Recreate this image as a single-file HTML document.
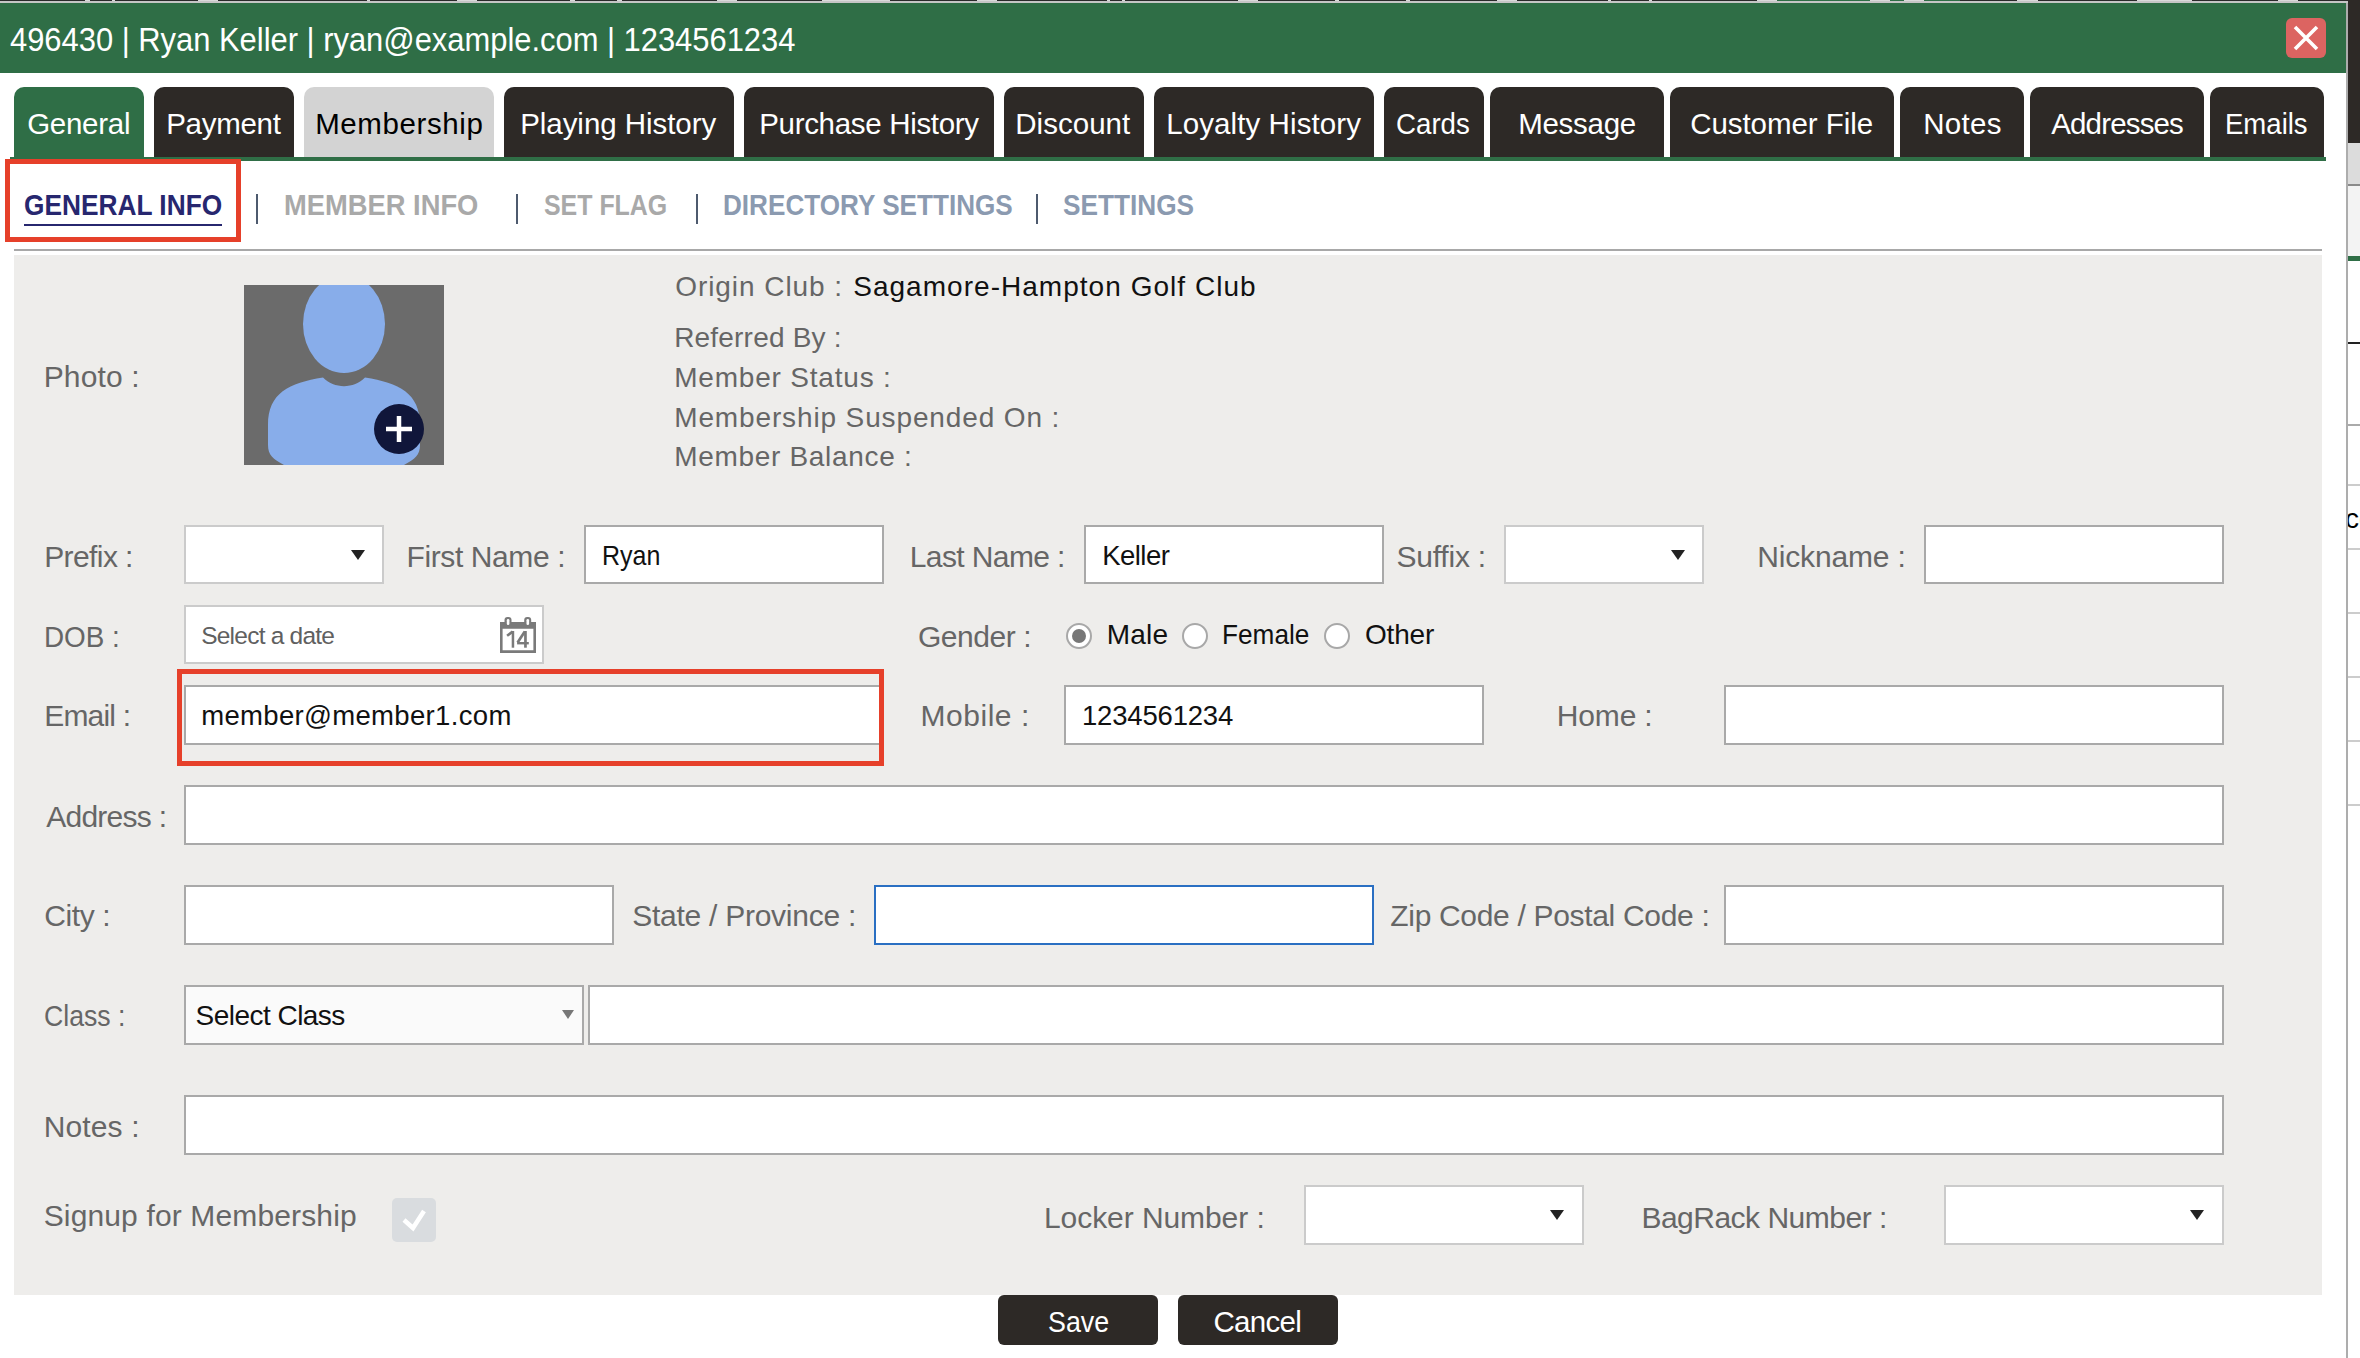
<!DOCTYPE html><html><head><meta charset="utf-8"><style>
html,body{margin:0;padding:0;width:2360px;height:1358px;overflow:hidden;background:#fff;position:relative;}
body{font-family:"Liberation Sans",sans-serif;}
.t{position:absolute;white-space:nowrap;}
.inp{position:absolute;box-sizing:border-box;background:#fff;border:2px solid #a9a9a9;}
.sel{position:absolute;box-sizing:border-box;background:#fff;border:2px solid #cbcbcb;}
.tab{position:absolute;top:87px;height:70px;background:#2d2926;border-radius:10px 10px 0 0;}
</style></head><body>
<div style="position:absolute;left:2348px;top:0px;width:12px;height:143px;background:#2d2926"></div>
<div style="position:absolute;left:2348px;top:143px;width:12px;height:41px;background:#dcdcdc"></div>
<div style="position:absolute;left:2348px;top:184px;width:12px;height:2px;background:#8a8a8a"></div>
<div style="position:absolute;left:2348px;top:186px;width:12px;height:70px;background:#f3f3f3"></div>
<div style="position:absolute;left:2348px;top:256px;width:12px;height:5px;background:#2f6e46"></div>
<div style="position:absolute;left:2348px;top:342px;width:12px;height:2px;background:#222"></div>
<div style="position:absolute;left:2348px;top:424px;width:12px;height:2px;background:#aaaaaa"></div>
<div style="position:absolute;left:2348px;top:484px;width:12px;height:2px;background:#cccccc"></div>
<div style="position:absolute;left:2348px;top:548px;width:12px;height:2px;background:#cccccc"></div>
<div style="position:absolute;left:2348px;top:612px;width:12px;height:2px;background:#cccccc"></div>
<div style="position:absolute;left:2348px;top:676px;width:12px;height:2px;background:#cccccc"></div>
<div style="position:absolute;left:2348px;top:740px;width:12px;height:2px;background:#cccccc"></div>
<div style="position:absolute;left:2348px;top:804px;width:12px;height:2px;background:#cccccc"></div>
<div class="t" style="left:2345px;top:505px;font-size:28px;line-height:28px;color:#000">co</div>
<div style="position:absolute;left:0px;top:0px;width:2348px;height:1px;background:#2a2a2a"></div>
<div style="position:absolute;left:0px;top:1px;width:2348px;height:2px;background:#c6c6c6"></div>
<div style="position:absolute;left:85px;top:0px;width:5px;height:1px;background:#dadada"></div>
<div style="position:absolute;left:112px;top:0px;width:3px;height:1px;background:#dadada"></div>
<div style="position:absolute;left:198px;top:0px;width:20px;height:1px;background:#dadada"></div>
<div style="position:absolute;left:367px;top:0px;width:3px;height:1px;background:#dadada"></div>
<div style="position:absolute;left:457px;top:0px;width:20px;height:1px;background:#dadada"></div>
<div style="position:absolute;left:570px;top:0px;width:5px;height:1px;background:#dadada"></div>
<div style="position:absolute;left:617px;top:0px;width:5px;height:1px;background:#dadada"></div>
<div style="position:absolute;left:717px;top:0px;width:20px;height:1px;background:#dadada"></div>
<div style="position:absolute;left:822px;top:0px;width:68px;height:1px;background:#dadada"></div>
<div style="position:absolute;left:977px;top:0px;width:20px;height:1px;background:#dadada"></div>
<div style="position:absolute;left:1107px;top:0px;width:3px;height:1px;background:#dadada"></div>
<div style="position:absolute;left:1122px;top:0px;width:3px;height:1px;background:#dadada"></div>
<div style="position:absolute;left:1238px;top:0px;width:20px;height:1px;background:#dadada"></div>
<div style="position:absolute;left:1335px;top:0px;width:4px;height:1px;background:#dadada"></div>
<div style="position:absolute;left:1406px;top:0px;width:4px;height:1px;background:#dadada"></div>
<div style="position:absolute;left:1497px;top:0px;width:20px;height:1px;background:#dadada"></div>
<div style="position:absolute;left:1608px;top:0px;width:3px;height:1px;background:#dadada"></div>
<div style="position:absolute;left:1649px;top:0px;width:3px;height:1px;background:#dadada"></div>
<div style="position:absolute;left:1757px;top:0px;width:20px;height:1px;background:#dadada"></div>
<div style="position:absolute;left:1870px;top:0px;width:20px;height:1px;background:#dadada"></div>
<div style="position:absolute;left:1904px;top:0px;width:20px;height:1px;background:#dadada"></div>
<div style="position:absolute;left:2017px;top:0px;width:21px;height:1px;background:#dadada"></div>
<div style="position:absolute;left:2137px;top:0px;width:55px;height:1px;background:#dadada"></div>
<div style="position:absolute;left:2278px;top:0px;width:20px;height:1px;background:#dadada"></div>
<div style="position:absolute;left:1777px;top:0px;width:93px;height:1px;background:#2f6e46"></div>
<div style="position:absolute;left:1890px;top:0px;width:14px;height:1px;background:#2f6e46"></div>
<div style="position:absolute;left:1924px;top:0px;width:36px;height:1px;background:#2f6e46"></div>
<div style="position:absolute;left:0px;top:3px;width:2346px;height:1355px;background:#fff"></div>
<div style="position:absolute;left:2346px;top:3px;width:2px;height:1355px;background:#adadad"></div>
<div style="position:absolute;left:0px;top:3px;width:2346px;height:70px;background:#2f6e46"></div>
<div style="position:absolute;left:2286px;top:18px;width:40px;height:40px;background:#dc6461;border-radius:6px"></div>
<svg style="position:absolute;left:2286px;top:18px" width="40" height="40"><path d="M9 9 L31 31 M31 9 L9 31" stroke="#fff" stroke-width="3.6"/></svg>
<div class="tab" style="left:14px;width:130px;background:#2f6e46;"></div>
<div class="tab" style="left:154px;width:140px;"></div>
<div class="tab" style="left:304px;width:190px;background:#d3d3d3;"></div>
<div class="tab" style="left:504px;width:230px;"></div>
<div class="tab" style="left:744px;width:250px;"></div>
<div class="tab" style="left:1004px;width:140px;"></div>
<div class="tab" style="left:1154px;width:220px;"></div>
<div class="tab" style="left:1384px;width:100px;"></div>
<div class="tab" style="left:1490px;width:174px;"></div>
<div class="tab" style="left:1670px;width:224px;"></div>
<div class="tab" style="left:1900px;width:124px;"></div>
<div class="tab" style="left:2030px;width:174px;"></div>
<div class="tab" style="left:2210px;width:114px;"></div>
<div style="position:absolute;left:10px;top:157px;width:2316px;height:4px;background:#2f6e46"></div>
<div style="position:absolute;left:5px;top:159px;width:236px;height:83px;box-sizing:border-box;border:5px solid #e6402a"></div>
<div style="position:absolute;left:24px;top:224px;width:198px;height:2px;background:#27276f"></div>
<div style="position:absolute;left:256px;top:194px;width:2px;height:30px;background:#4d5a6e"></div>
<div style="position:absolute;left:516px;top:194px;width:2px;height:30px;background:#4d5a6e"></div>
<div style="position:absolute;left:696px;top:194px;width:2px;height:30px;background:#4d5a6e"></div>
<div style="position:absolute;left:1036px;top:194px;width:2px;height:30px;background:#4d5a6e"></div>
<div style="position:absolute;left:14px;top:249px;width:2308px;height:2px;background:#a8a8a8"></div>
<div style="position:absolute;left:14px;top:255px;width:2308px;height:1040px;background:#eeedeb"></div>
<svg style="position:absolute;left:244px;top:285px" width="200" height="180" viewBox="0 0 200 180">
<rect width="200" height="180" fill="#6b6b6b"/>
<ellipse cx="100" cy="39" rx="41" ry="49" fill="#88adea"/>
<path d="M40 180 C29 174 24 170 24 160 L24 140 C24 108 45 98 79 92.5 C90 104 110 104 121 92.5 C155 98 176 108 176 140 L176 160 C176 170 171 174 160 180 Z" fill="#88adea"/>
<circle cx="155" cy="144" r="25" fill="#10163a"/>
<path d="M142 144 H168 M155 131 V157" stroke="#fff" stroke-width="4.5"/>
</svg>
<div class="sel" style="position:absolute;left:184px;top:525px;width:200px;height:59px;"></div>
<div class="inp" style="position:absolute;left:584px;top:525px;width:300px;height:59px;"></div>
<div class="inp" style="position:absolute;left:1084px;top:525px;width:300px;height:59px;"></div>
<div class="sel" style="position:absolute;left:1504px;top:525px;width:200px;height:59px;"></div>
<div class="inp" style="position:absolute;left:1924px;top:525px;width:300px;height:59px;"></div>
<svg style="position:absolute;left:351px;top:550px" width="14" height="10"><path d="M0 0 H14 L7.0 10 Z" fill="#222"/></svg>
<svg style="position:absolute;left:1671px;top:550px" width="14" height="10"><path d="M0 0 H14 L7.0 10 Z" fill="#222"/></svg>
<div class="inp" style="position:absolute;left:184px;top:605px;width:360px;height:59px;border-color:#cbcbcb"></div>
<svg style="position:absolute;left:498px;top:615px" width="40" height="40" viewBox="0 0 40 40">
<path d="M2 7 H38 V38 H2 Z M4.6 13.8 V35.2 H35.4 V13.8 Z" fill="#7a7a7a" fill-rule="evenodd"/>
<rect x="6.5" y="2" width="7" height="8.5" rx="3" fill="#7a7a7a"/><rect x="26.2" y="2" width="7" height="8.5" rx="3" fill="#7a7a7a"/>
<rect x="8.8" y="4" width="2.6" height="6" rx="1.3" fill="#fff"/><rect x="28.5" y="4" width="2.6" height="6" rx="1.3" fill="#fff"/>
<rect x="13.7" y="16" width="2.5" height="16.7" fill="#7a7a7a"/><path d="M9.1 20.8 L14.6 16.6" stroke="#7a7a7a" stroke-width="2.6"/><rect x="26.1" y="16" width="2.7" height="16.7" fill="#7a7a7a"/><path d="M19.6 27.6 L26.8 16.4" stroke="#7a7a7a" stroke-width="2.7"/><rect x="19.1" y="27" width="11.7" height="2.4" fill="#7a7a7a"/>
</svg>
<svg style="position:absolute;left:1066px;top:623px" width="26" height="26"><circle cx="13" cy="13" r="12" fill="#fff" stroke="#a8a8a8" stroke-width="2"/><circle cx="13" cy="13" r="7" fill="#777"/></svg>
<svg style="position:absolute;left:1182px;top:623px" width="26" height="26"><circle cx="13" cy="13" r="12" fill="#fff" stroke="#a8a8a8" stroke-width="2"/></svg>
<svg style="position:absolute;left:1324px;top:623px" width="26" height="26"><circle cx="13" cy="13" r="12" fill="#fff" stroke="#a8a8a8" stroke-width="2"/></svg>
<div style="position:absolute;left:177px;top:669px;width:707px;height:97px;box-sizing:border-box;border:5px solid #e6402a;overflow:hidden"><div class="inp" style="left:2px;top:11px;width:760px;height:60px"></div></div>
<div class="inp" style="position:absolute;left:1064px;top:685px;width:420px;height:60px;"></div>
<div class="inp" style="position:absolute;left:1724px;top:685px;width:500px;height:60px;"></div>
<div class="inp" style="position:absolute;left:184px;top:785px;width:2040px;height:60px;"></div>
<div class="inp" style="position:absolute;left:184px;top:885px;width:430px;height:60px;"></div>
<div class="inp" style="position:absolute;left:874px;top:885px;width:500px;height:60px;border-color:#2a6fc2"></div>
<div class="inp" style="position:absolute;left:1724px;top:885px;width:500px;height:60px;"></div>
<div class="inp" style="position:absolute;left:184px;top:985px;width:400px;height:60px;background:#fafafa"></div>
<svg style="position:absolute;left:562px;top:1010px" width="12" height="9"><path d="M0 0 H12 L6.0 9 Z" fill="#777"/></svg>
<div class="inp" style="position:absolute;left:588px;top:985px;width:1636px;height:60px;"></div>
<div class="inp" style="position:absolute;left:184px;top:1095px;width:2040px;height:60px;"></div>
<div style="position:absolute;left:392px;top:1198px;width:44px;height:44px;background:#d9dcdf;border-radius:5px"></div>
<svg style="position:absolute;left:392px;top:1198px" width="44" height="44"><path d="M12 22 L21 30 L32 13" stroke="#fff" stroke-width="4.5" fill="none"/></svg>
<div class="sel" style="position:absolute;left:1304px;top:1185px;width:280px;height:60px;"></div>
<div class="sel" style="position:absolute;left:1944px;top:1185px;width:280px;height:60px;"></div>
<svg style="position:absolute;left:1550px;top:1210px" width="14" height="10"><path d="M0 0 H14 L7.0 10 Z" fill="#222"/></svg>
<svg style="position:absolute;left:2190px;top:1210px" width="14" height="10"><path d="M0 0 H14 L7.0 10 Z" fill="#222"/></svg>
<div style="position:absolute;left:998px;top:1295px;width:160px;height:50px;background:#2d2926;border-radius:6px"></div>
<div style="position:absolute;left:1178px;top:1295px;width:160px;height:50px;background:#2d2926;border-radius:6px"></div>
<div class="t" id="hdr" style="left:10.29px;top:22.21px;font-size:34.00px;line-height:34.00px;font-weight:normal;color:#ffffff;letter-spacing:0.000px;transform:scaleX(0.9087);transform-origin:0 0;">496430 | Ryan Keller | ryan@example.com | 1234561234</div>
<div class="t" id="tab0" style="left:27.20px;top:109.02px;font-size:29.50px;line-height:29.50px;font-weight:normal;color:#fff;letter-spacing:-0.283px;">General</div>
<div class="t" id="tab1" style="left:166.20px;top:109.02px;font-size:29.50px;line-height:29.50px;font-weight:normal;color:#fff;letter-spacing:-0.283px;">Payment</div>
<div class="t" id="tab2" style="left:315.20px;top:109.02px;font-size:29.50px;line-height:29.50px;font-weight:normal;color:#000;letter-spacing:0.589px;">Membership</div>
<div class="t" id="tab3" style="left:520.20px;top:109.02px;font-size:29.50px;line-height:29.50px;font-weight:normal;color:#fff;letter-spacing:-0.050px;">Playing History</div>
<div class="t" id="tab4" style="left:759.20px;top:109.02px;font-size:29.50px;line-height:29.50px;font-weight:normal;color:#fff;letter-spacing:-0.313px;">Purchase History</div>
<div class="t" id="tab5" style="left:1015.20px;top:109.02px;font-size:29.50px;line-height:29.50px;font-weight:normal;color:#fff;letter-spacing:0.043px;">Discount</div>
<div class="t" id="tab6" style="left:1166.20px;top:109.02px;font-size:29.50px;line-height:29.50px;font-weight:normal;color:#fff;letter-spacing:0.093px;">Loyalty History</div>
<div class="t" id="tab7" style="left:1396.32px;top:109.02px;font-size:29.50px;line-height:29.50px;font-weight:normal;color:#fff;letter-spacing:0.000px;transform:scaleX(0.9382);transform-origin:0 0;">Cards</div>
<div class="t" id="tab8" style="left:1518.20px;top:109.02px;font-size:29.50px;line-height:29.50px;font-weight:normal;color:#fff;letter-spacing:-0.283px;">Message</div>
<div class="t" id="tab9" style="left:1690.20px;top:109.02px;font-size:29.50px;line-height:29.50px;font-weight:normal;color:#fff;letter-spacing:-0.058px;">Customer File</div>
<div class="t" id="tab10" style="left:1923.20px;top:109.02px;font-size:29.50px;line-height:29.50px;font-weight:normal;color:#fff;letter-spacing:0.325px;">Notes</div>
<div class="t" id="tab11" style="left:2051.20px;top:109.02px;font-size:29.50px;line-height:29.50px;font-weight:normal;color:#fff;letter-spacing:-0.837px;">Addresses</div>
<div class="t" id="tab12" style="left:2225.33px;top:109.02px;font-size:29.50px;line-height:29.50px;font-weight:normal;color:#fff;letter-spacing:0.000px;transform:scaleX(0.9337);transform-origin:0 0;">Emails</div>
<div class="t" id="st1" style="left:24.32px;top:189.60px;font-size:30.00px;line-height:30.00px;font-weight:bold;color:#27276f;letter-spacing:0.000px;transform:scaleX(0.8763);transform-origin:0 0;">GENERAL INFO</div>
<div class="t" id="st2" style="left:284.38px;top:189.60px;font-size:30.00px;line-height:30.00px;font-weight:bold;color:#a9a9a9;letter-spacing:0.000px;transform:scaleX(0.9110);transform-origin:0 0;">MEMBER INFO</div>
<div class="t" id="st3" style="left:544.37px;top:189.60px;font-size:30.00px;line-height:30.00px;font-weight:bold;color:#a9a9a9;letter-spacing:0.000px;transform:scaleX(0.8308);transform-origin:0 0;">SET FLAG</div>
<div class="t" id="st4" style="left:723.46px;top:189.60px;font-size:30.00px;line-height:30.00px;font-weight:bold;color:#8b9ab0;letter-spacing:0.000px;transform:scaleX(0.8706);transform-origin:0 0;">DIRECTORY SETTINGS</div>
<div class="t" id="st5" style="left:1063.33px;top:189.60px;font-size:30.00px;line-height:30.00px;font-weight:bold;color:#8b9ab0;letter-spacing:0.000px;transform:scaleX(0.8736);transform-origin:0 0;">SETTINGS</div>
<div class="t" id="photo" style="left:43.70px;top:361.60px;font-size:30.00px;line-height:30.00px;font-weight:normal;color:#666666;letter-spacing:0.133px;">Photo :</div>
<div class="t" id="oc" style="left:675.20px;top:273.29px;font-size:28.00px;line-height:28.00px;font-weight:normal;color:#666666;letter-spacing:0.942px;">Origin Club :</div>
<div class="t" id="ocv" style="left:853.20px;top:273.29px;font-size:28.00px;line-height:28.00px;font-weight:normal;color:#111111;letter-spacing:1.032px;">Sagamore-Hampton Golf Club</div>
<div class="t" id="rb" style="left:674.20px;top:324.29px;font-size:28.00px;line-height:28.00px;font-weight:normal;color:#666666;letter-spacing:0.192px;">Referred By :</div>
<div class="t" id="ms" style="left:674.20px;top:364.29px;font-size:28.00px;line-height:28.00px;font-weight:normal;color:#666666;letter-spacing:0.807px;">Member Status :</div>
<div class="t" id="mso" style="left:674.20px;top:404.29px;font-size:28.00px;line-height:28.00px;font-weight:normal;color:#666666;letter-spacing:0.871px;">Membership Suspended On :</div>
<div class="t" id="mb" style="left:674.20px;top:443.29px;font-size:28.00px;line-height:28.00px;font-weight:normal;color:#666666;letter-spacing:0.687px;">Member Balance :</div>
<div class="t" id="prefix" style="left:44.20px;top:542.10px;font-size:30.00px;line-height:30.00px;font-weight:normal;color:#666666;letter-spacing:-0.586px;">Prefix :</div>
<div class="t" id="fn" style="left:406.50px;top:542.10px;font-size:30.00px;line-height:30.00px;font-weight:normal;color:#666666;letter-spacing:-0.391px;">First Name :</div>
<div class="t" id="fnv" style="left:601.98px;top:541.72px;font-size:27.50px;line-height:27.50px;font-weight:normal;color:#111111;letter-spacing:0.000px;transform:scaleX(0.9098);transform-origin:0 0;">Ryan</div>
<div class="t" id="ln" style="left:909.80px;top:542.10px;font-size:30.00px;line-height:30.00px;font-weight:normal;color:#666666;letter-spacing:-0.610px;">Last Name :</div>
<div class="t" id="lnv" style="left:1102.20px;top:541.72px;font-size:27.50px;line-height:27.50px;font-weight:normal;color:#111111;letter-spacing:-0.540px;">Keller</div>
<div class="t" id="suf" style="left:1396.40px;top:542.10px;font-size:30.00px;line-height:30.00px;font-weight:normal;color:#666666;letter-spacing:-0.200px;">Suffix :</div>
<div class="t" id="nick" style="left:1757.20px;top:542.10px;font-size:30.00px;line-height:30.00px;font-weight:normal;color:#666666;letter-spacing:-0.156px;">Nickname :</div>
<div class="t" id="dob" style="left:44.34px;top:621.60px;font-size:30.00px;line-height:30.00px;font-weight:normal;color:#666666;letter-spacing:0.000px;transform:scaleX(0.9286);transform-origin:0 0;">DOB :</div>
<div class="t" id="dobv" style="left:201.20px;top:624.06px;font-size:24.50px;line-height:24.50px;font-weight:normal;color:#606060;letter-spacing:-0.767px;">Select a date</div>
<div class="t" id="gen" style="left:917.90px;top:622.10px;font-size:30.00px;line-height:30.00px;font-weight:normal;color:#666666;letter-spacing:-0.443px;">Gender :</div>
<div class="t" id="male" style="left:1106.70px;top:621.09px;font-size:28.00px;line-height:28.00px;font-weight:normal;color:#111111;letter-spacing:0.200px;">Male</div>
<div class="t" id="fem" style="left:1222.13px;top:621.09px;font-size:28.00px;line-height:28.00px;font-weight:normal;color:#111111;letter-spacing:0.000px;transform:scaleX(0.9356);transform-origin:0 0;">Female</div>
<div class="t" id="oth" style="left:1365.00px;top:621.09px;font-size:28.00px;line-height:28.00px;font-weight:normal;color:#111111;letter-spacing:-0.175px;">Other</div>
<div class="t" id="email" style="left:44.20px;top:701.10px;font-size:30.00px;line-height:30.00px;font-weight:normal;color:#666666;letter-spacing:-0.800px;">Email :</div>
<div class="t" id="emailv" style="left:201.20px;top:701.72px;font-size:27.50px;line-height:27.50px;font-weight:normal;color:#111111;letter-spacing:0.329px;">member@member1.com</div>
<div class="t" id="mob" style="left:920.50px;top:701.30px;font-size:30.00px;line-height:30.00px;font-weight:normal;color:#666666;letter-spacing:0.529px;">Mobile :</div>
<div class="t" id="mobv" style="left:1082.00px;top:701.72px;font-size:27.50px;line-height:27.50px;font-weight:normal;color:#111111;letter-spacing:-0.189px;">1234561234</div>
<div class="t" id="home" style="left:1556.80px;top:701.30px;font-size:30.00px;line-height:30.00px;font-weight:normal;color:#666666;letter-spacing:-0.160px;">Home :</div>
<div class="t" id="addr" style="left:46.20px;top:801.80px;font-size:30.00px;line-height:30.00px;font-weight:normal;color:#666666;letter-spacing:-0.737px;">Address :</div>
<div class="t" id="city" style="left:44.20px;top:901.00px;font-size:30.00px;line-height:30.00px;font-weight:normal;color:#666666;letter-spacing:-0.400px;">City :</div>
<div class="t" id="state" style="left:632.30px;top:901.00px;font-size:30.00px;line-height:30.00px;font-weight:normal;color:#666666;letter-spacing:-0.265px;">State / Province :</div>
<div class="t" id="zip" style="left:1390.30px;top:901.00px;font-size:30.00px;line-height:30.00px;font-weight:normal;color:#666666;letter-spacing:-0.322px;">Zip Code / Postal Code :</div>
<div class="t" id="cls" style="left:44.42px;top:1000.90px;font-size:30.00px;line-height:30.00px;font-weight:normal;color:#666666;letter-spacing:0.000px;transform:scaleX(0.8885);transform-origin:0 0;">Class :</div>
<div class="t" id="clsv" style="left:195.60px;top:1001.99px;font-size:28.00px;line-height:28.00px;font-weight:normal;color:#111111;letter-spacing:-0.536px;">Select Class</div>
<div class="t" id="notes" style="left:43.70px;top:1111.60px;font-size:30.00px;line-height:30.00px;font-weight:normal;color:#666666;letter-spacing:0.133px;">Notes :</div>
<div class="t" id="signup" style="left:43.70px;top:1201.40px;font-size:30.00px;line-height:30.00px;font-weight:normal;color:#666666;letter-spacing:0.140px;">Signup for Membership</div>
<div class="t" id="locker" style="left:1044.00px;top:1202.60px;font-size:30.00px;line-height:30.00px;font-weight:normal;color:#666666;letter-spacing:-0.071px;">Locker Number :</div>
<div class="t" id="bag" style="left:1641.40px;top:1202.60px;font-size:30.00px;line-height:30.00px;font-weight:normal;color:#666666;letter-spacing:-0.500px;">BagRack Number :</div>
<div class="t" id="save" style="left:1047.78px;top:1306.82px;font-size:29.50px;line-height:29.50px;font-weight:normal;color:#fff;letter-spacing:0.000px;transform:scaleX(0.9094);transform-origin:0 0;">Save</div>
<div class="t" id="cancel" style="left:1213.50px;top:1306.82px;font-size:29.50px;line-height:29.50px;font-weight:normal;color:#fff;letter-spacing:-0.720px;">Cancel</div>
</body></html>
